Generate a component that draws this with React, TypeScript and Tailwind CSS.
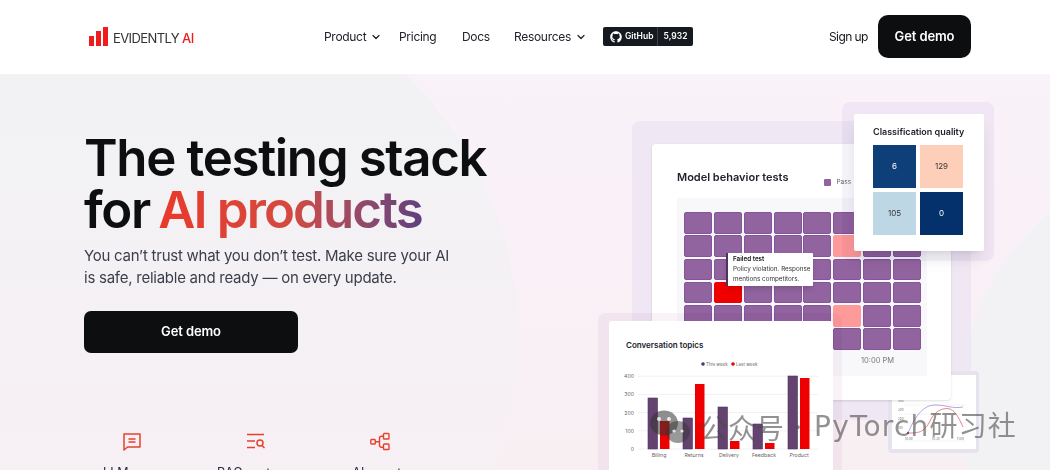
import { ChevronDown } from "lucide-react";
import { FaGithub } from "react-icons/fa";

const ROWS = 6;
const COLS = 8;
const bars = [
  { name: "Billing", x: 648, dark: 398, red: 421 },
  { name: "Returns", x: 683, dark: 418, red: 384 },
  { name: "Delivery", x: 718, dark: 407, red: 441 },
  { name: "Feedback", x: 753, dark: 424, red: 443 },
  { name: "Product", x: 788, dark: 376, red: 378 },
];

function cellColor(r: number, c: number) {
  if (r === 3 && c === 1) return "border-[#ee0000] bg-[#ee0000]";
  if ((r === 1 || r === 4) && c === 5) return "border-[#ff9a9a] bg-[#ff9a9a]";
  return "border-[#84559a] bg-[#91639f]";
}

function Logo() {
  return (
    <div className="flex w-[200px] items-end gap-[5px]">
      <div className="flex items-end gap-[2px]">
        <span className="h-[10px] w-[5px] bg-[#ee1c1c]" />
        <span className="h-[15px] w-[5px] bg-[#ee1c1c]" />
        <span className="h-[19px] w-[5px] bg-[#ee1c1c]" />
      </div>
      <span className="text-[13px] leading-[16px] tracking-[-0.6px] text-[#333]">
        EVIDENTLY <span className="font-medium text-[#ee1c1c]">AI</span>
      </span>
    </div>
  );
}

function Nav() {
  return (
    <nav className="flex items-center text-[12px] tracking-[-0.3px] text-[#20232b]">
      <a className="flex w-[75px] items-center gap-[4px]">
        Product <ChevronDown size={12} strokeWidth={2.5} />
      </a>
      <a className="w-[63px]">Pricing</a>
      <a className="w-[52px]">Docs</a>
      <a className="flex w-[89px] items-center gap-[4px]">
        Resources <ChevronDown size={12} strokeWidth={2.5} />
      </a>
      <div className="flex h-[19px] w-[90px] items-center rounded-[2px] bg-[#16191f] text-[8.5px] font-semibold tracking-normal text-white">
        <div className="flex w-[55px] items-center gap-[3px] border-r border-[#3a3f48] pl-[7px] leading-[19px]">
          <FaGithub size={12} />
          GitHub
        </div>
        <div className="flex-1 text-center">5,932</div>
      </div>
    </nav>
  );
}

function Header() {
  return (
    <header className="flex h-[74px] items-center bg-white pb-[1px] pl-[89px]">
      <Logo />
      <div className="ml-[35px]">
        <Nav />
      </div>
      <a className="ml-[136px] w-[38px] whitespace-nowrap text-[12px] tracking-[-0.6px] text-[#14161a]">Sign up</a>
      <a className="ml-[11px] flex h-[43px] w-[93px] items-center justify-center rounded-[10px] bg-[#0d0e10] text-[13px] font-semibold tracking-[-0.1px] text-white">
        Get demo
      </a>
    </header>
  );
}

function ChatIcon() {
  return (
    <svg width="20" height="20" viewBox="0 0 20 20" fill="none" stroke="#e8412f" strokeWidth="1.5">
      <path d="M2 2h16v13H5.5L2 18z" strokeLinejoin="round" />
      <path d="M6.5 7h7M6.5 10h7" />
    </svg>
  );
}

function SearchIcon() {
  return (
    <svg width="20" height="20" viewBox="0 0 20 20" fill="none" stroke="#e8412f" strokeWidth="1.5">
      <path d="M1 2.5h17M1 9h8M1 15.5h8" />
      <circle cx="14" cy="11" r="3" />
      <path d="M16 13.5l2.5 2.5" />
    </svg>
  );
}

function AgentIcon() {
  return (
    <svg width="20" height="20" viewBox="0 0 20 20" fill="none" stroke="#e8412f" strokeWidth="1.4">
      <rect x="0.8" y="7.5" width="4.5" height="4.5" rx="0.8" />
      <rect x="13.5" y="1.5" width="5.5" height="5.5" rx="0.8" />
      <rect x="13.5" y="12" width="5.5" height="5.5" rx="0.8" />
      <path d="M5.3 9.7h4M13.5 4.3h-2a2 2 0 0 0-2 2v7a2 2 0 0 0 2 2h2" />
    </svg>
  );
}

function HeroCopy() {
  return (
    <div className="relative pl-[84px] pt-[58px]">
      <h1 className="text-[51px] font-semibold leading-[52px] tracking-[-1.35px] text-[#0d0e10]">
        The testing stack
        <br />
        for{" "}
        <span className="-ml-[3px] bg-gradient-to-r from-[#e8392a] via-[#d4493f] to-[#5f3f7f] bg-clip-text tracking-[-1.9px] text-transparent">
          AI products
        </span>
      </h1>
      <p className="mt-[9px] w-[375px] text-[15px] leading-[22px] tracking-[-0.25px] text-[#3a3f4a]">
        You can’t trust what you don’t test. Make sure your AI is safe, reliable and ready — on every update.
      </p>
      <a className="mt-[22px] flex h-[42px] w-[214px] items-center justify-center rounded-[7px] bg-[#0d0e10] text-[13px] font-semibold tracking-[-0.1px] text-white">
        Get demo
      </a>
      <div className="-ml-[14px] mt-[79px] flex text-center text-[12.5px] leading-[18px] text-[#2a2d35]">
        <div className="flex w-[124px] flex-col items-center gap-[12px]">
          <ChatIcon />
          <span>LLM apps</span>
        </div>
        <div className="flex w-[124px] flex-col items-center gap-[12px]">
          <SearchIcon />
          <span>RAG systems</span>
        </div>
        <div className="flex w-[124px] flex-col items-center gap-[12px]">
          <AgentIcon />
          <span>AI agents</span>
        </div>
      </div>
    </div>
  );
}

function BehaviorCard() {
  return (
    <div className="absolute left-[652px] top-[70px] h-[256px] w-[299px] rounded-[4px] bg-white px-[25px] pt-[25px] shadow-sm">
      <div className="flex h-[29px] items-start">
        <span className="text-[11px] font-semibold text-[#20232b]">Model behavior tests</span>
        <span className="ml-[36px] mt-[9px] flex items-center gap-[5px] text-[6.5px] text-[#666]">
          <span className="h-[7px] w-[7px] rounded-[1px] bg-[#91639f]" />
          Pass
        </span>
      </div>
      <div className="h-[178px] w-[250px] bg-[#f8f8fa] pl-[7px] pt-[14px]">
        <div className="grid w-[237px] grid-cols-8 gap-[1.7px]">
          {Array.from({ length: ROWS * COLS }, (_, i) => (
            <div
              key={i}
              className={`h-[21.6px] rounded-[2px] border ${cellColor(Math.floor(i / COLS), i % COLS)}`}
            />
          ))}
        </div>
        <div className="mt-[5px] pl-[177px] text-[7.5px] text-[#777]">10:00 PM</div>
      </div>
    </div>
  );
}

function FailedTooltip() {
  return (
    <div className="absolute left-[726px] top-[179px] h-[33px] w-[87px] whitespace-nowrap rounded-[1px] border-l-2 border-[#4b3560] bg-white pl-[5px] pt-[1px] text-[6.3px] leading-[10px] text-[#333] shadow-md">
      <div className="font-semibold text-[#111]">Failed test</div>
      <div>Policy violation. Response</div>
      <div>mentions competitors.</div>
    </div>
  );
}

function QualityCard() {
  return (
    <>
      <div className="absolute left-[842px] top-[28px] h-[159px] w-[152px] rounded-[8px] bg-[#f7f3fb] mix-blend-multiply" />
      <div className="absolute left-[854px] top-[40px] h-[137px] w-[130px] rounded-[2px] bg-white pl-[19px] pt-[11px] shadow-lg">
        <div className="whitespace-nowrap text-[9px] font-semibold leading-[14px] text-[#20232b]">Classification quality</div>
        <div className="mt-[6px] grid w-[90px] grid-cols-2 gap-[4px] text-center text-[8px] leading-[43px]">
          <div className="h-[43px] bg-[#0f3f78] text-white">6</div>
          <div className="h-[43px] bg-[#fdcfb8] text-[#333]">129</div>
          <div className="h-[43px] bg-[#bdd7e5] text-[#333]">105</div>
          <div className="h-[43px] bg-[#04316b] text-white">0</div>
        </div>
      </div>
    </>
  );
}

function TopicsChart() {
  return (
    <svg width="224" height="110" viewBox="609 360 224 110" className="absolute left-0 top-[39px]">
      <g fontFamily="Inter, sans-serif" fontSize="5.2" fill="#666">
        <circle cx="703" cy="364" r="1.8" fill="#4f3365" />
        <text x="706" y="366" fontSize="4.5">This week</text>
        <circle cx="733" cy="364" r="1.8" fill="#ee0000" />
        <text x="736" y="366" fontSize="4.5">Last week</text>
        {[0, 100, 200, 300, 400].map((v, i) => {
          const y = 449 - i * 18.2;
          return (
            <g key={v}>
              <line x1="638" x2="818" y1={y} y2={y} stroke="#f1f1f4" strokeWidth="1" />
              <text x="634" y={y + 2} textAnchor="end">{v}</text>
            </g>
          );
        })}
        {bars.map((b) => (
          <g key={b.name}>
            <rect x={b.x} y={b.dark} width="9.5" height={449 - b.dark} fill="#64446f" stroke="#4f3365" strokeWidth="0.6" />
            <rect x={b.x + 12} y={b.red} width="9.5" height={449 - b.red} fill="#ee0000" />
            <text x={b.x + 11} y="457" textAnchor="middle">{b.name}</text>
          </g>
        ))}
      </g>
    </svg>
  );
}

function TopicsCard() {
  return (
    <>
      <div className="absolute left-[598px] top-[239px] h-[170px] w-[244px] rounded-[8px] bg-[#f9f3f8] mix-blend-multiply" />
      <div className="absolute left-[609px] top-[247px] h-[170px] w-[224px] rounded-[3px] bg-white pl-[17px] pt-[18px]">
        <div className="whitespace-nowrap text-[8px] font-semibold leading-[12px] text-[#20232b]">Conversation topics</div>
        <TopicsChart />
      </div>
    </>
  );
}

function LinesCard() {
  return (
    <div className="absolute left-[888px] top-[297px] h-[82px] w-[91px] rounded-[4px] bg-[#e6e2ee] p-[3.5px]">
      <div className="h-[74px] w-[84px] bg-white">
        <svg width="84" height="74" viewBox="0 0 84 74" fill="none">
          <path d="M12 30h62M12 39h62M12 48h62M12 66h62" stroke="#f4f4f6" />
          <path d="M16 58C22 44 30 30 43 30 55 30 60 34 71 32" stroke="#a68bd8" strokeWidth="0.8" />
          <path d="M16 58C26 58 32 58 38 46 42 37 50 32 58 34 65 37 68 46 71 52" stroke="#e0686a" strokeWidth="0.8" />
          <circle cx="16" cy="58" r="1.2" fill="#7a4d8f" />
          <g fontSize="3" fill="#777" fontFamily="Inter, sans-serif">
            <text x="6" y="27">400</text>
            <text x="6" y="36">300</text>
            <text x="6" y="45">200</text>
            <text x="6" y="54">100</text>
            <text x="13" y="65">10:00</text>
            <text x="40" y="65">10:30</text>
            <text x="65" y="65">11:00</text>
          </g>
        </svg>
      </div>
    </div>
  );
}

function Watermark() {
  return (
    <div className="pointer-events-none absolute left-[650px] top-[333px] flex items-center whitespace-nowrap text-[28px] leading-[40px] text-[#4a4a4a]/60">
      <svg width="46" height="34" viewBox="0 0 46 34" className="mr-[4px]">
        <ellipse cx="14" cy="13" rx="14" ry="12.5" fill="#333" fillOpacity="0.55" />
        <ellipse cx="28" cy="22" rx="12" ry="11" fill="#333" fillOpacity="0.5" />
        <circle cx="9" cy="9" r="2" fill="#fff" fillOpacity="0.8" />
        <circle cx="19" cy="9" r="2" fill="#fff" fillOpacity="0.8" />
        <circle cx="24" cy="21" r="1.6" fill="#fff" fillOpacity="0.8" />
        <circle cx="32" cy="21" r="1.6" fill="#fff" fillOpacity="0.8" />
      </svg>
      <span className="font-['Noto_Sans_CJK_SC',sans-serif]">公众号</span>
      <span className="ml-[10px] mr-[12px]">·</span>
      <span className="font-['DejaVu_Sans','Noto_Sans_CJK_SC',sans-serif] tracking-[1.2px]">PyTorch研习社</span>
    </div>
  );
}

export default function App() {
  return (
    <div className="h-[470px] w-[1050px] overflow-hidden bg-white font-['Inter',sans-serif]">
      <Header />
      <main className="relative h-[396px] overflow-hidden bg-gradient-to-b from-[#f9f2f9] to-[#f8eff3]">
        {/* soft background blobs */}
        <div className="absolute left-[-222px] top-[-104px] h-[740px] w-[740px] rounded-full bg-gradient-to-b from-[#f2f2f5] from-20% to-[#f8eff3] to-80%" />
        <div className="absolute left-[960px] top-[80px] h-[500px] w-[500px] rounded-full bg-[#f2f2f5]" />
        <HeroCopy />
        <div className="absolute left-[632px] top-[47px] h-[299px] w-[339px] rounded-[8px] bg-[#efe8f4]" />
        <LinesCard />
        <BehaviorCard />
        <TopicsCard />
        <FailedTooltip />
        <QualityCard />
        <Watermark />
      </main>
    </div>
  );
}
